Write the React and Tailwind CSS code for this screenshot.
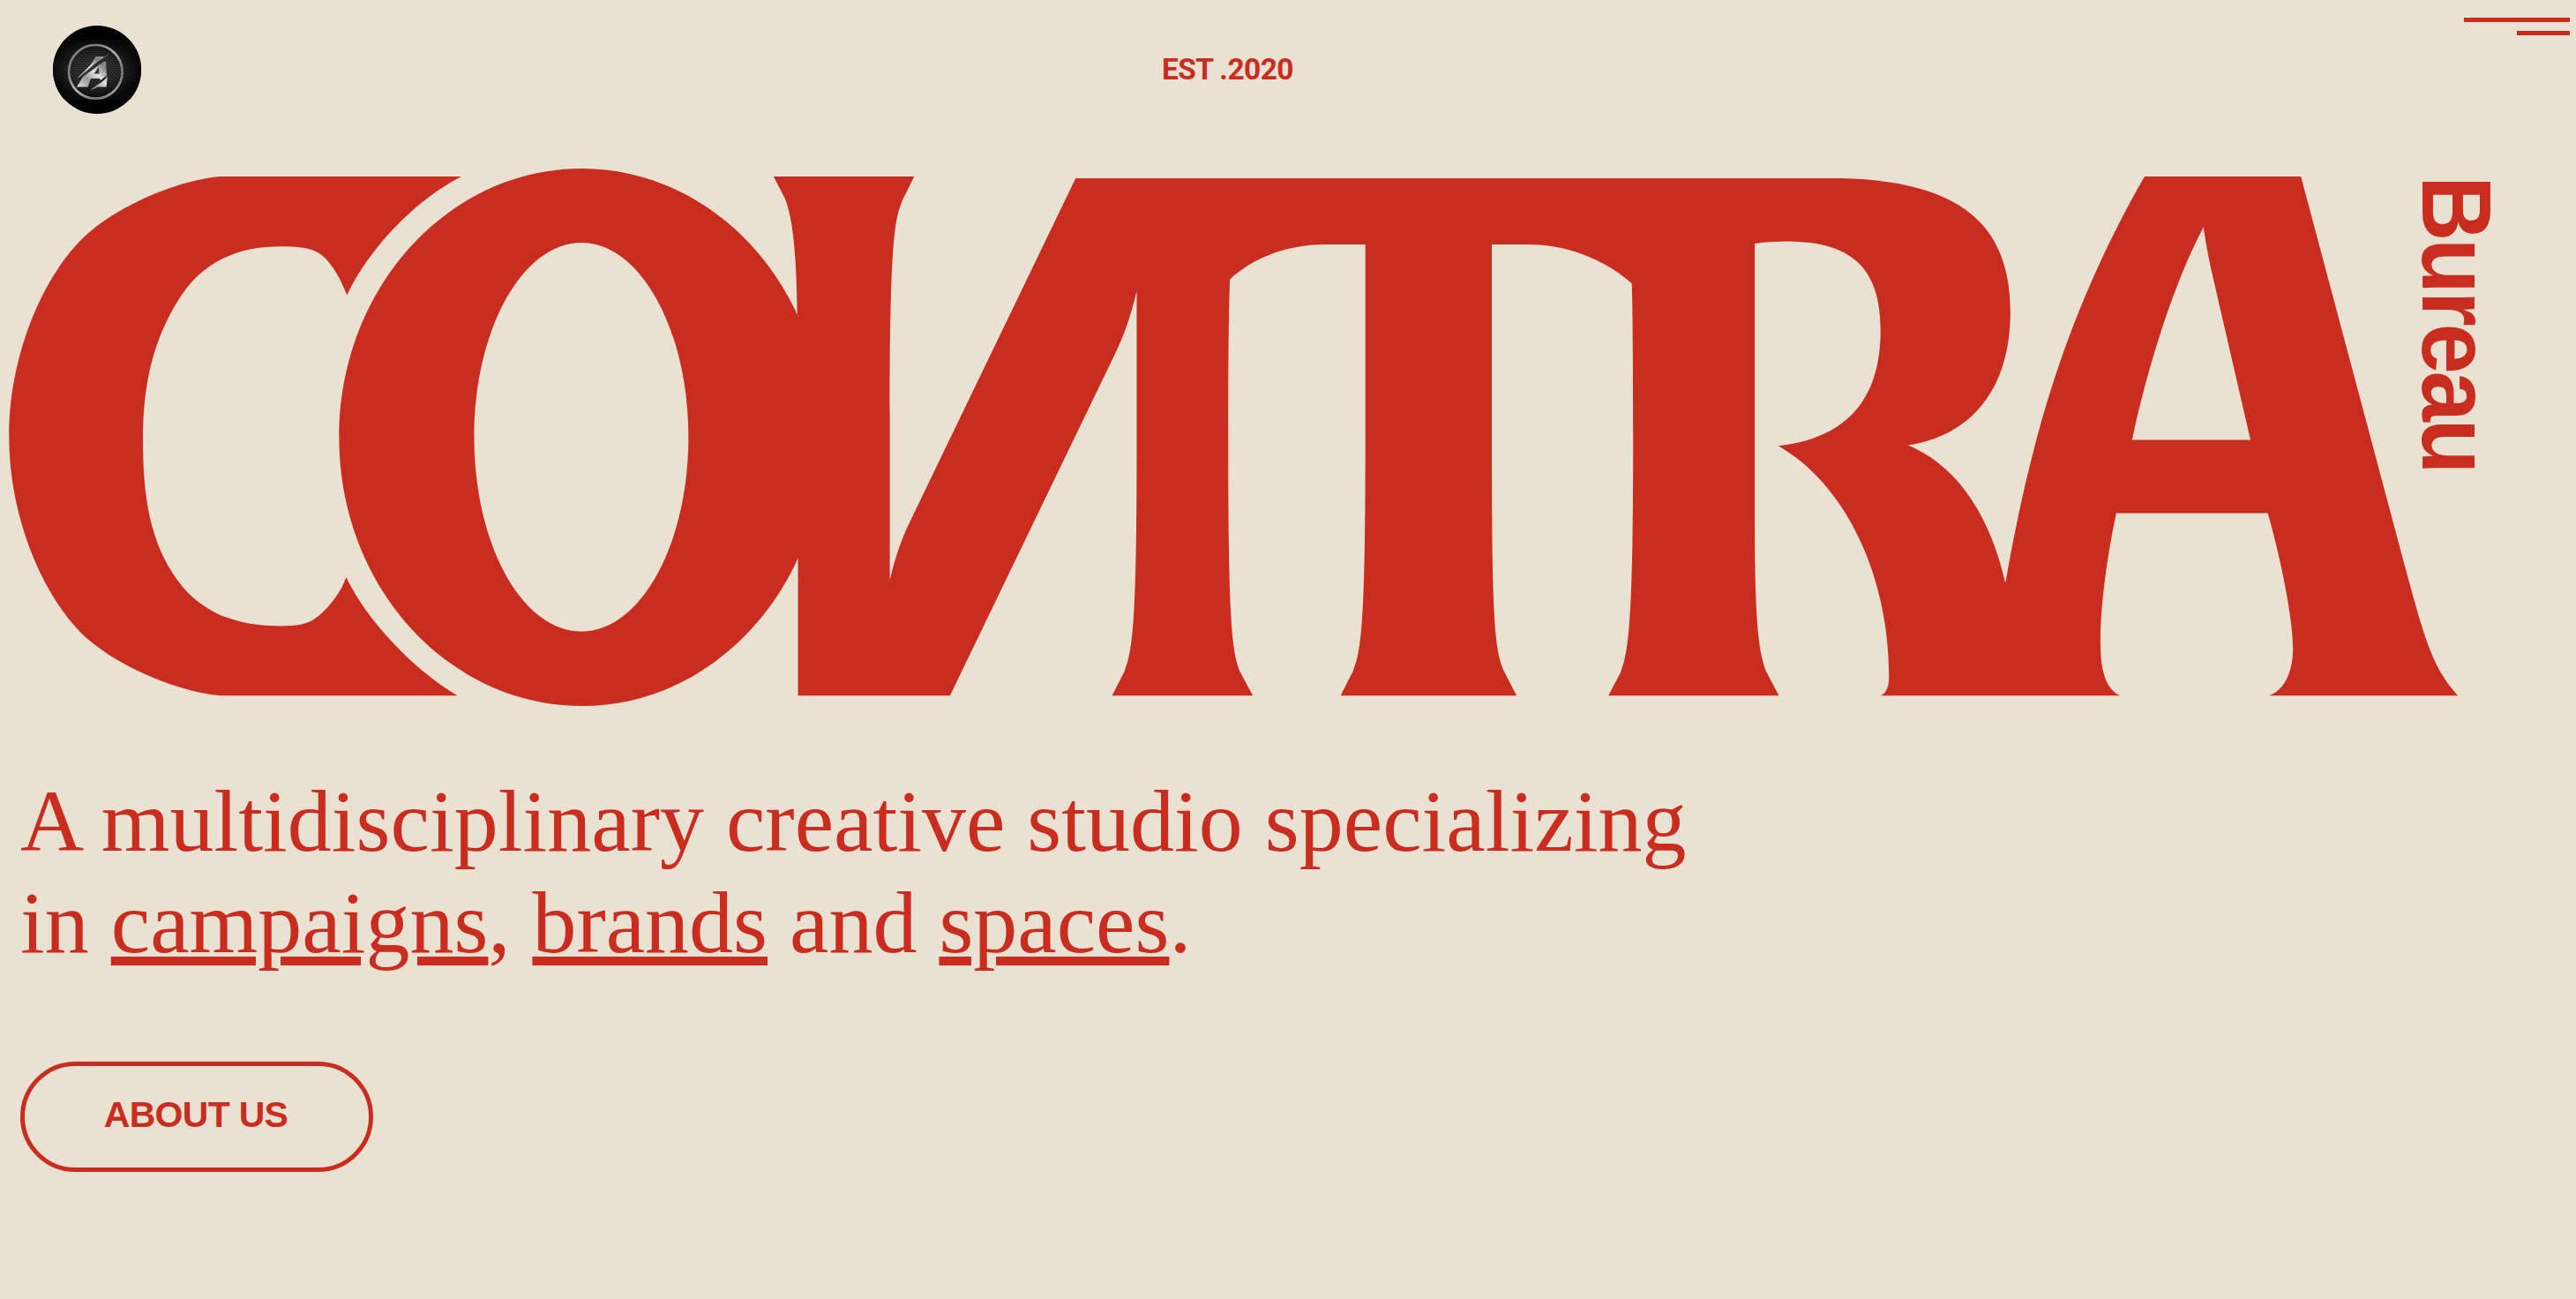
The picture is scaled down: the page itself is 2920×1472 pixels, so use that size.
const RED = "#c92d20";

function Avatar() {
  return (
    <svg viewBox="0 0 100 100" className="block size-[100px]" role="img" aria-label="A">
      <defs>
        <clipPath id="disc">
          <circle cx="50" cy="50" r="50" />
        </clipPath>
        <radialGradient id="glow" cx="0.48" cy="0.5" r="0.5">
          <stop offset="0" stopColor="#404040" />
          <stop offset="0.55" stopColor="#2a2a2a" />
          <stop offset="1" stopColor="#0a0a0a" />
        </radialGradient>
        <linearGradient id="ring" x1="0" y1="0" x2="1" y2="1">
          <stop offset="0" stopColor="#8a8a8a" />
          <stop offset="0.25" stopColor="#7c7c7c" />
          <stop offset="0.5" stopColor="#b4b4b4" />
          <stop offset="0.75" stopColor="#757575" />
          <stop offset="1" stopColor="#b8b8b8" />
        </linearGradient>
        <linearGradient id="steel" gradientUnits="userSpaceOnUse" x1="28" y1="72" x2="64" y2="34">
          <stop offset="0" stopColor="#e2e2e2" />
          <stop offset="0.3" stopColor="#9a9a9a" />
          <stop offset="0.52" stopColor="#e2e2e2" />
          <stop offset="0.75" stopColor="#808080" />
          <stop offset="1" stopColor="#b0b0b0" />
        </linearGradient>
        <pattern id="mesh" width="4" height="4" patternUnits="userSpaceOnUse">
          <rect width="2.4" height="1.1" fill="#000" opacity="0.55" />
          <rect x="2" y="2" width="2.4" height="1.1" fill="#000" opacity="0.55" />
        </pattern>
      </defs>
      <g clipPath="url(#disc)">
        <rect width="100" height="100" fill="#000" />
        <rect y="16" width="100" height="68" fill="url(#glow)" />
        <rect y="16" width="100" height="68" fill="url(#mesh)" />
        <circle cx="48.3" cy="52.3" r="30.3" fill="none" stroke="url(#ring)" strokeWidth="2.7" />
        <g fill="url(#steel)">
          <path d="M48.500 35H57L59 36L65 31L46 44.500L33 56L27.500 60C32 53.500 41 48 45 41Z" />
          <path d="M27 69.500L34 58L58 40.500L60 41L61 56.500L54 62L53 60H43L39.500 69.500ZM46.500 54.500H52.500L52 47Z" />
          <path d="M42.500 73.500C50 66 57 65 62 57L60.500 69.500H51Z" />
        </g>
      </g>
    </svg>
  );
}

function Wordmark() {
  return (
    <svg viewBox="0 180 2790 640" className="block h-[640px] w-[2790px] shrink-0" fill={RED} role="img" aria-label="Contra">
      {/* open bowl */}
      <path d="M250 200H523C470 227 418 282 393.300 334.300C385 313 373 293 360 286C350 280 335 279.200 317 279.200C280 279.200 237 290 207.600 331.800C176 378 162 430 162 498C162 570 172 622 207.600 665.700C235 697 272 709.400 317 709.400C335 709.400 350 708 361 698C375 686 387 670 392.400 653.900C415 702 469 759 518.300 788.200H250C205 784.500 142 759 103.500 727.500C54 687 10.300 593 10.300 494.500C10.300 396 54 302 103.500 261.300C142 229.500 205 203.500 250 200Z" />
      {/* ring */}
      <path
        fillRule="evenodd"
        d="M659.400 191C811 191 934 327 934 495.500C934 664 811 800 659.400 800C507.500 800 384.400 664 384.400 495.500C384.400 327 507.500 191 659.400 191ZM659 275.100C592 275.100 537.500 374 537.500 495.300C537.500 617 592 715.500 659 715.500C726 715.500 780.400 617 780.400 495.300C780.400 374 726 275.100 659 275.100Z"
      />
      {/* joined stems, crossbar and final pair */}
      <path
        fillRule="evenodd"
        d="M876.900 200H1036.300L1022.900 227C1015 248 1008.600 262 1008.600 470V657.600C1013.500 636 1021 612 1031.300 591.400L1219.300 202H2086.300C2214 205 2278.800 248 2278.800 354C2278.800 440 2235 494 2162.600 504.500C2218 527 2256 584 2273.200 660.800C2303 490 2345 350 2430.900 200H2608.200L2725 638C2748 722 2757 757 2786.100 788.200H2572.300C2590 782 2599.200 760 2599.200 735C2599.200 703 2586 635 2570.600 581.600H2398.900C2389 628 2380.900 685 2380.900 727C2380.900 761 2387 780 2402.800 788.200H2132.300C2138 785 2141.300 779 2141.300 766C2141.300 650 2090 547 2015.600 505.300C2098 496 2131.700 448 2131.700 374C2131.700 298 2094 264 1989 275.900V580C1989 700 1993 740 2002.800 762.400L2016.500 788.200H1823.200L1837 762C1846.500 738 1851.200 700 1851.200 500C1851.200 400 1850.500 345 1849.700 321.200C1823 297 1780 277.100 1733.900 277.100H1691V500C1691 700 1694 734 1704.500 760L1719.100 788.200H1519.600L1533.500 761C1543.500 738 1547.700 700 1547.700 500V277.100H1502.800C1455 277.100 1417 295 1394.100 316.700C1393 350 1392.200 400 1392.200 490C1392.200 700 1396 736 1405.500 761L1420.100 788.200H1260.600L1275 760C1284.500 734 1288.500 700 1288.500 500V329.800C1283 353 1277 373 1266.200 396.300L1076.900 788.200H904.600V357.600H903.700C903 300 900 250 889.800 224.900ZM2497.700 257.600C2501 280 2505 300 2510 320.800L2551 498.400H2416.800C2436 409 2466 317 2497.700 257.600Z"
      />
    </svg>
  );
}

function Underlined({ children }) {
  return (
    <a className="underline decoration-[10px] underline-offset-[5px]">{children}</a>
  );
}

export default function App() {
  return (
    <div className="flex h-[1472px] w-[2920px] flex-col overflow-hidden bg-[#eae1d2] text-[#c92d20]">
      <header className="grid h-[180px] shrink-0 grid-cols-3 pr-[7px]">
        <div className="pt-[29px] pl-[60px]">
          <Avatar />
        </div>
        <div className="pt-[55px] pr-[130px] text-center font-[Roboto,sans-serif] text-[33.5px] leading-[48px] font-bold tracking-[-0.6px]">
          EST .2020
        </div>
        <div className="flex flex-col items-end gap-[10px] pt-5">
          <span className="h-[5px] w-[120px] bg-[#c92d20]" />
          <span className="h-[5px] w-[60px] bg-[#c92d20]" />
        </div>
      </header>

      <div className="flex h-[640px] shrink-0">
        <Wordmark />
        <div className="-ml-[62px] pt-[19px]">
          <span className="block origin-top scale-y-[0.93] font-['Liberation_Sans',Arial,sans-serif] text-[111px] leading-[112px] font-bold tracking-[-3.7px] [writing-mode:vertical-rl]">
            Bureau
          </span>
        </div>
      </div>

      <main className="flex flex-col items-start pt-[53px] pl-[23px]">
        <h1 className="font-['Liberation_Serif','Times_New_Roman',serif] text-[100px] leading-[115px] whitespace-nowrap">
          A multidisciplinary creative studio specializing
          <br />
          in <Underlined>campaigns</Underlined>, <Underlined>brands</Underlined> and{" "}
          <Underlined>spaces</Underlined>.
        </h1>
        <button className="mt-[100px] flex h-[125px] w-[400px] items-center justify-center rounded-full border-[5px] border-[#c92d20] pr-[2px] pb-[4px] font-['Liberation_Sans',Arial,sans-serif] text-[41px] font-bold tracking-[-0.7px]">
          ABOUT US
        </button>
      </main>
    </div>
  );
}
